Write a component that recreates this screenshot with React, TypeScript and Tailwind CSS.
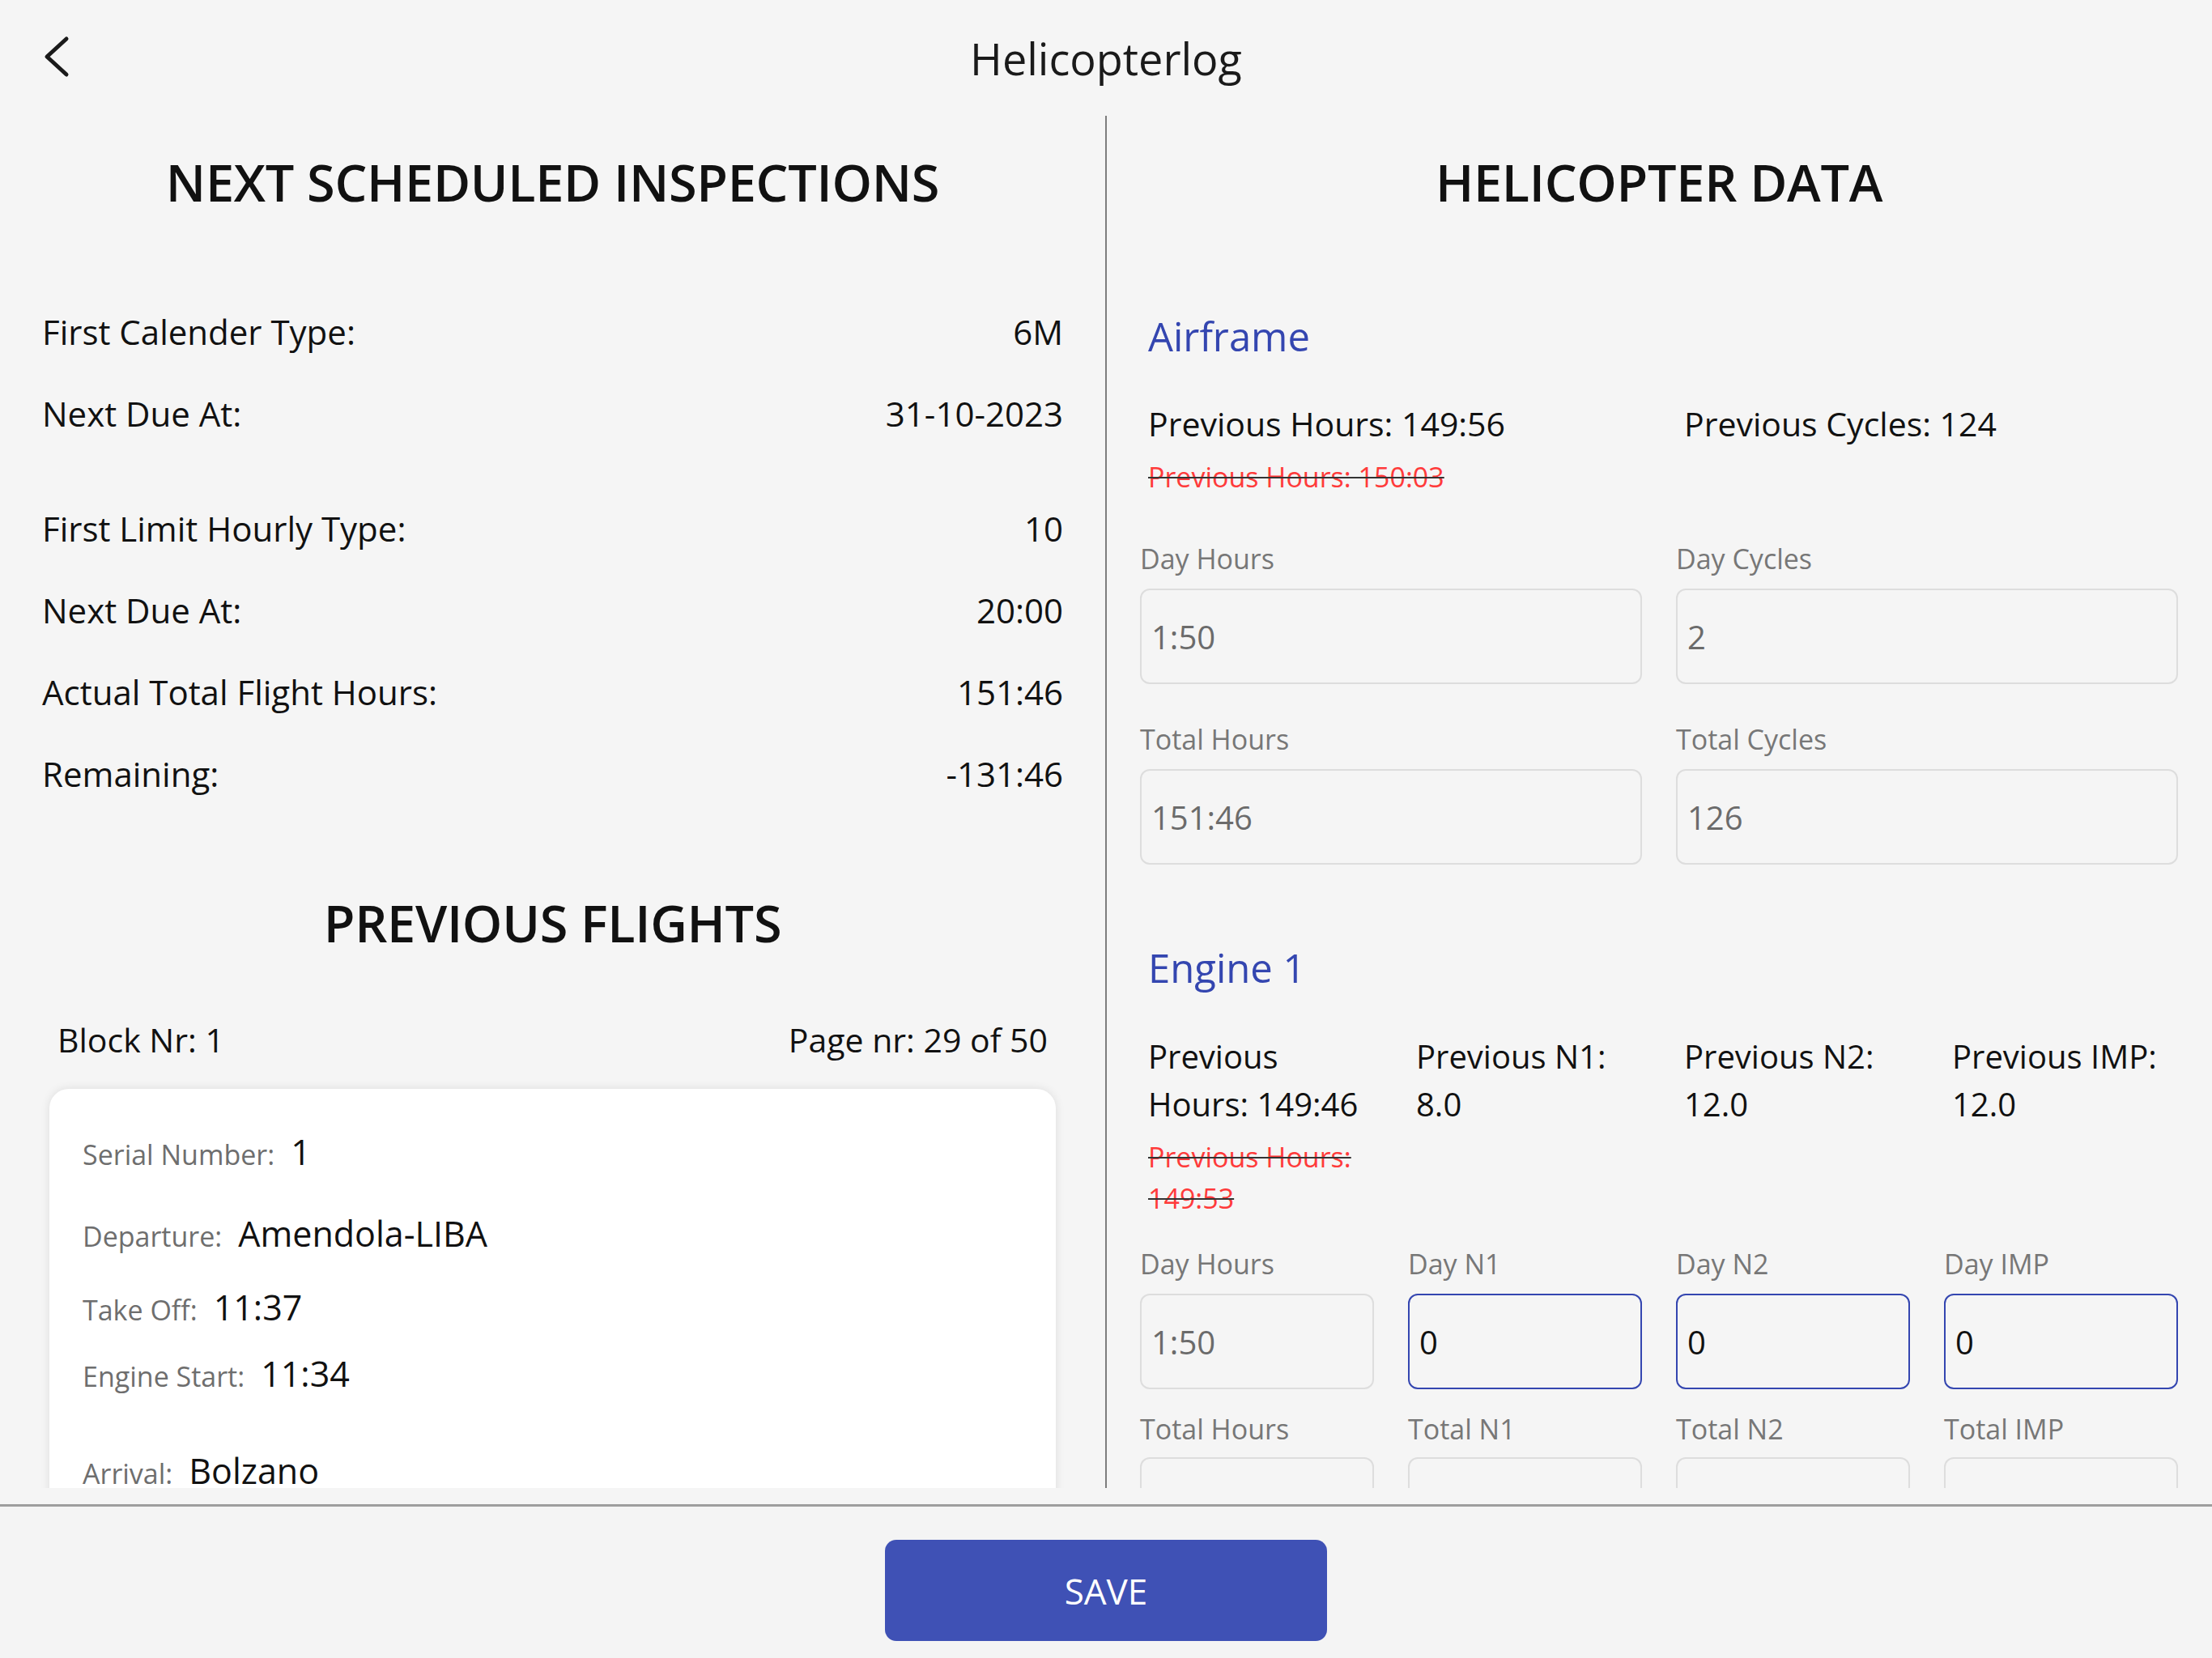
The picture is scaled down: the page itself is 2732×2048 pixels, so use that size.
import React from "react";

// Righe delle ispezioni programmate
const inspectionGroups = [
  [
    { label: "First Calender Type:", value: "6M" },
    { label: "Next Due At:", value: "31-10-2023" },
  ],
  [
    { label: "First Limit Hourly Type:", value: "10" },
    { label: "Next Due At:", value: "20:00" },
    { label: "Actual Total Flight Hours:", value: "151:46" },
    { label: "Remaining:", value: "-131:46" },
  ],
];

// Dati del volo precedente (scheda bianca)
const flightRows = [
  { label: "Serial Number:", value: "1", mt: "mt-0" },
  { label: "Departure:", value: "Amendola-LIBA", mt: "mt-[58px]" },
  { label: "Take Off:", value: "11:37", mt: "mt-[48px]" },
  { label: "Engine Start:", value: "11:34", mt: "mt-[39px]" },
  { label: "Arrival:", value: "Bolzano", mt: "mt-[77px]" },
];

const BackIcon = () => (
  <svg width="40" height="56" viewBox="0 0 40 56" fill="none">
    <polyline
      points="32,6 8,28 32,50"
      stroke="#1a1a1a"
      strokeWidth="5"
      strokeLinecap="round"
      strokeLinejoin="round"
    />
  </svg>
);

// Campo di input: grigio se disabilitato, bordo blu se modificabile
const Field = ({
  label,
  value,
  active = false,
  labelMt = "mt-0",
  inputMt = "mt-[15px]",
}: {
  label: string;
  value: string;
  active?: boolean;
  labelMt?: string;
  inputMt?: string;
}) => (
  <div className="flex flex-col">
    <span
      className={`${labelMt} text-[34px] leading-[44px] text-[#777777]`}
    >
      {label}
    </span>
    <input
      readOnly
      value={value}
      className={`${inputMt} h-[118px] w-full rounded-[12px] border-2 bg-transparent px-[12px] text-[40px] outline-none ${
        active
          ? "border-[#3446b0] text-[#111111]"
          : "border-[#dddddd] text-[#6b6b6b]"
      }`}
    />
  </div>
);

const App = () => {
  return (
    <div className="flex h-[2048px] w-[2732px] flex-col overflow-hidden bg-[#f5f5f5] font-['Open_Sans',sans-serif] text-[#111111]">
      {/* Header */}
      <header className="relative flex h-[143px] shrink-0 items-center justify-center">
        <button className="absolute left-[50px] top-[42px]">
          <BackIcon />
        </button>
        <h1 className="text-[54px] leading-none text-[#1a1a1a]">
          Helicopterlog
        </h1>
      </header>

      {/* Contenuto a due colonne */}
      <main className="flex h-[1695px] shrink-0 overflow-hidden">
        {/* Colonna sinistra */}
        <section className="w-[1365px] shrink-0 overflow-hidden px-[52px]">
          <h2 className="mt-[46px] text-center text-[63px] font-semibold leading-[72px] tracking-[-0.3px]">
            NEXT SCHEDULED INSPECTIONS
          </h2>

          <div className="mt-[98px]">
            {inspectionGroups.map((group, gi) => (
              <div key={gi} className={gi > 0 ? "mt-[41px]" : ""}>
                {group.map((row, ri) => (
                  <div
                    key={ri}
                    className="flex h-[101px] items-center justify-between text-[42px]"
                  >
                    <span>{row.label}</span>
                    <span>{row.value}</span>
                  </div>
                ))}
              </div>
            ))}
          </div>

          <h2 className="mt-[98px] text-center text-[63px] font-semibold leading-[72px] tracking-[-0.3px]">
            PREVIOUS FLIGHTS
          </h2>

          <div className="mt-[83px] flex justify-between px-[19px] text-[41px] leading-[50px]">
            <span>Block Nr: 1</span>
            <span>Page nr: 29 of 50</span>
          </div>

          <div className="mx-[9px] mt-[36px] h-[900px] rounded-[24px] bg-white px-[41px] pt-[58px] shadow-[0_0_12px_rgba(0,0,0,0.10)]">
            {flightRows.map((row) => (
              <div
                key={row.label}
                className={`${row.mt} flex items-baseline gap-[20px] leading-[40px]`}
              >
                <span className="text-[34px] text-[#6e6e6e]">{row.label}</span>
                <span className="text-[43px] text-[#111111]">{row.value}</span>
              </div>
            ))}
          </div>
        </section>

        <div className="w-[2px] shrink-0 bg-[#7d7d7d]" />

        {/* Colonna destra */}
        <section className="flex-1 overflow-hidden pl-[41px] pr-[42px]">
          <h2 className="mt-[46px] text-center text-[63px] font-semibold leading-[72px] tracking-[-0.3px]">
            HELICOPTER DATA
          </h2>

          {/* Airframe */}
          <h3 className="mt-[124px] pl-[10px] text-[49px] leading-[60px] text-[#3446b0]">
            Airframe
          </h3>
          <div className="mt-[50px] grid grid-cols-2 gap-x-[42px] text-[41px] leading-[56px]">
            <span className="pl-[10px]">Previous Hours: 149:56</span>
            <span className="pl-[10px]">Previous Cycles: 124</span>
          </div>
          <div className="mt-[14px] pl-[10px] text-[34px] leading-[48px] text-[#ff3b3b] line-through decoration-[#333333] decoration-2">
            Previous Hours: 150:03
          </div>
          <div className="grid grid-cols-2 gap-x-[42px]">
            <Field label="Day Hours" value="1:50" labelMt="mt-[55px]" />
            <Field label="Day Cycles" value="2" labelMt="mt-[55px]" />
            <Field label="Total Hours" value="151:46" labelMt="mt-[46px]" />
            <Field label="Total Cycles" value="126" labelMt="mt-[46px]" />
          </div>

          {/* Engine 1 */}
          <h3 className="mt-[97px] pl-[10px] text-[49px] leading-[60px] text-[#3446b0]">
            Engine 1
          </h3>
          <div className="mt-[50px] grid grid-cols-4 gap-x-[42px] text-[40px] leading-[59px]">
            <div className="pl-[10px]">
              <div>Previous Hours: 149:46</div>
              <div className="mt-[11px] text-[34px] leading-[51px] text-[#ff3b3b] line-through decoration-[#333333] decoration-2">
                Previous Hours: 149:53
              </div>
            </div>
            <div className="pl-[10px]">Previous N1: 8.0</div>
            <div className="pl-[10px]">Previous N2: 12.0</div>
            <div className="pl-[10px]">Previous IMP: 12.0</div>
          </div>
          <div className="grid grid-cols-4 gap-x-[42px]">
            <Field label="Day Hours" value="1:50" labelMt="mt-[33px]" />
            <Field label="Day N1" value="0" active labelMt="mt-[33px]" />
            <Field label="Day N2" value="0" active labelMt="mt-[33px]" />
            <Field label="Day IMP" value="0" active labelMt="mt-[33px]" />
            <Field label="Total Hours" value="" labelMt="mt-[27px]" inputMt="mt-[13px]" />
            <Field label="Total N1" value="" labelMt="mt-[27px]" inputMt="mt-[13px]" />
            <Field label="Total N2" value="" labelMt="mt-[27px]" inputMt="mt-[13px]" />
            <Field label="Total IMP" value="" labelMt="mt-[27px]" inputMt="mt-[13px]" />
          </div>
        </section>
      </main>

      {/* Footer con pulsante di salvataggio */}
      <div className="h-[20px] shrink-0" />
      <footer className="flex flex-1 justify-center border-t-[3px] border-[#9e9e9e] bg-[#f4f4f4]">
        <button className="mt-[41px] h-[125px] w-[546px] rounded-[14px] bg-[#3f51b5] text-[44px] text-white">
          SAVE
        </button>
      </footer>
    </div>
  );
};

export default App;
